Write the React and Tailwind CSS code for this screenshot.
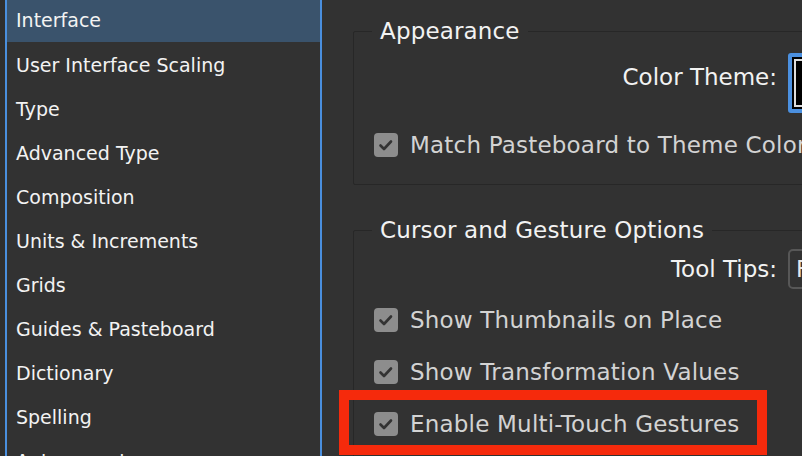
import React from 'react';

const NAV = [
  'Interface',
  'User Interface Scaling',
  'Type',
  'Advanced Type',
  'Composition',
  'Units & Increments',
  'Grids',
  'Guides & Pasteboard',
  'Dictionary',
  'Spelling',
  'Autocorrect',
];

function Check({ label }) {
  return (
    <div className="flex items-center h-[28px] gap-[12px]">
      <span className="w-[24px] h-[24px] shrink-0 rounded-[4px] bg-[#8d8d8d] flex items-center justify-center">
        <svg width="24" height="24" viewBox="0 0 24 24" fill="none">
          <polyline points="6.5,12.5 10,16 17,8.5" stroke="#333" strokeWidth="2.6" strokeLinecap="round" strokeLinejoin="round" />
        </svg>
      </span>
      <span className="text-[23px] leading-[28px] tracking-[0.2px] text-[#d3d3d3] whitespace-nowrap">{label}</span>
    </div>
  );
}

function Group({ title, className = '', children }) {
  return (
    <fieldset className={`w-[600px] border border-[#272727] rounded-[2px] px-[20px] pb-[25px] ${className}`}>
      <legend className="-ml-[2px] px-[8px] text-[23px] leading-[28px] tracking-[0.15px] text-[#f2f2f2]">{title}</legend>
      {children}
    </fieldset>
  );
}

export default function App() {
  return (
    <div className="relative w-[802px] h-[456px] overflow-hidden bg-[#323232] flex font-['DejaVu_Sans',sans-serif]">
      {/* sidebar */}
      <div className="w-[322px] shrink-0 pl-[5px] bg-[#2f2f2f]">
        <div className="h-full border-x-2 border-[#4a8fde] bg-[#323232] overflow-hidden">
          <ul className="-mt-[2px]">
            {NAV.map((n, i) => (
              <li
                key={n}
                className={`h-[44px] flex items-center pl-[9px] text-[19px] text-[#f3f3f3] whitespace-nowrap ${i === 0 ? 'bg-[#3a536c] mb-[1px] pt-[1px]' : ''}`}
              >
                {n}
              </li>
            ))}
          </ul>
        </div>
      </div>

      {/* settings */}
      <div className="flex-1 overflow-hidden pl-[31px] pt-[17px]">
        <Group title="Appearance">
          <div className="flex items-start h-[60px] mt-[8px]">
            <span className="w-[403px] shrink-0 text-right mt-[10px] text-[23px] leading-[28px] text-[#f2f2f2]">Color Theme:</span>
            <div className="ml-[11px] w-[200px] h-[60px] shrink-0 border-[4px] border-[#4b90e0] rounded-[3px] bg-black p-[2px]">
              <div className="h-full border-2 border-[#dcdcdc] bg-black" />
            </div>
          </div>
          <div className="mt-[18px]">
            <Check label="Match Pasteboard to Theme Color" />
          </div>
        </Group>

        <Group title="Cursor and Gesture Options" className="mt-[31px]">
          <div className="flex items-center h-[40px] mt-[5px]">
            <span className="w-[403px] shrink-0 text-right text-[23px] leading-[28px] text-[#f2f2f2]">Tool Tips:</span>
            <div className="ml-[11px] w-[200px] h-[40px] shrink-0 border-2 border-[#575757] rounded-[5px] flex items-center pl-[6px] text-[23px] text-[#e6e6e6]">
              Fast
            </div>
          </div>
          <div className="mt-[17px] flex flex-col gap-[24px]">
            <Check label="Show Thumbnails on Place" />
            <Check label="Show Transformation Values" />
            <Check label="Enable Multi-Touch Gestures" />
          </div>
        </Group>
      </div>

      {/* annotation */}
      <div className="absolute left-[339px] top-[390px] w-[428px] h-[65px] border-[10px] border-[#f52a0c]" />
    </div>
  );
}
